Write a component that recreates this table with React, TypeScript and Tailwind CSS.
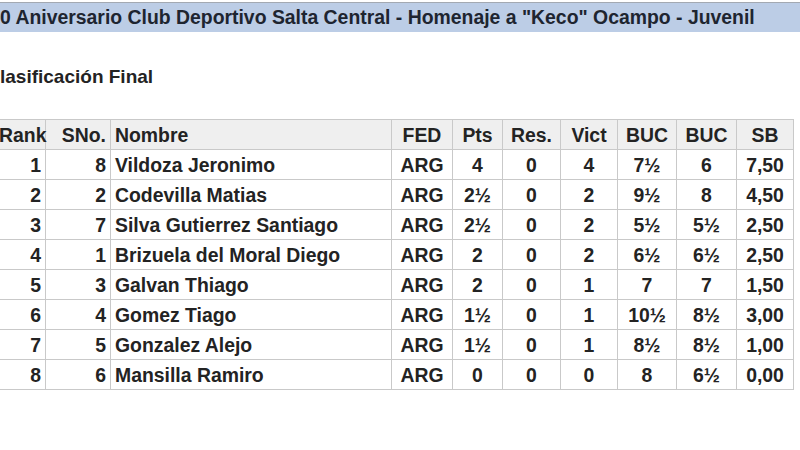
import React from "react";

type Row = {
  rank: number;
  sno: number;
  name: string;
  fed: string;
  pts: string;
  res: string;
  vict: string;
  buc1: string;
  buc2: string;
  sb: string;
};

const rows: Row[] = [
  { rank: 1, sno: 8, name: "Vildoza Jeronimo", fed: "ARG", pts: "4", res: "0", vict: "4", buc1: "7½", buc2: "6", sb: "7,50" },
  { rank: 2, sno: 2, name: "Codevilla Matias", fed: "ARG", pts: "2½", res: "0", vict: "2", buc1: "9½", buc2: "8", sb: "4,50" },
  { rank: 3, sno: 7, name: "Silva Gutierrez Santiago", fed: "ARG", pts: "2½", res: "0", vict: "2", buc1: "5½", buc2: "5½", sb: "2,50" },
  { rank: 4, sno: 1, name: "Brizuela del Moral Diego", fed: "ARG", pts: "2", res: "0", vict: "2", buc1: "6½", buc2: "6½", sb: "2,50" },
  { rank: 5, sno: 3, name: "Galvan Thiago", fed: "ARG", pts: "2", res: "0", vict: "1", buc1: "7", buc2: "7", sb: "1,50" },
  { rank: 6, sno: 4, name: "Gomez Tiago", fed: "ARG", pts: "1½", res: "0", vict: "1", buc1: "10½", buc2: "8½", sb: "3,00" },
  { rank: 7, sno: 5, name: "Gonzalez Alejo", fed: "ARG", pts: "1½", res: "0", vict: "1", buc1: "8½", buc2: "8½", sb: "1,00" },
  { rank: 8, sno: 6, name: "Mansilla Ramiro", fed: "ARG", pts: "0", res: "0", vict: "0", buc1: "8", buc2: "6½", sb: "0,00" },
];

const cell = "border border-[#c9c9c9] h-[30px] p-0 px-[4px] whitespace-nowrap";

export default function App() {
  return (
    <div className="h-[450px] w-[800px] overflow-hidden bg-white font-['Liberation_Sans',Arial,sans-serif] font-bold text-[#232323]">
      <div className="mt-[2px] flex h-[30px] items-center border-t border-[#a3a9b2] bg-[#bccde6] text-[19.4px] text-[#1e2530]">
        0 Aniversario Club Deportivo Salta Central - Homenaje a "Keco" Ocampo - Juvenil
      </div>
      <div className="mt-[33px] text-[19px] leading-[24px]">lasificación Final</div>
      <table className="-ml-[6px] mt-[30px] w-[799px] table-fixed border-collapse text-[19.4px] leading-[22px]">
        <colgroup>
          <col className="w-[51px]" />
          <col className="w-[65px]" />
          <col className="w-[281px]" />
          <col className="w-[61px]" />
          <col className="w-[50px]" />
          <col className="w-[58px]" />
          <col className="w-[57px]" />
          <col className="w-[59px]" />
          <col className="w-[60px]" />
          <col className="w-[57px]" />
        </colgroup>
        <thead>
          <tr className="bg-[#efefef]">
            <th className={`${cell} text-right`}>Rank</th>
            <th className={`${cell} text-right`}>SNo.</th>
            <th className={`${cell} text-left`}>Nombre</th>
            <th className={`${cell} text-center`}>FED</th>
            <th className={`${cell} text-center`}>Pts</th>
            <th className={`${cell} text-center`}>Res.</th>
            <th className={`${cell} text-center`}>Vict</th>
            <th className={`${cell} text-center`}>BUC</th>
            <th className={`${cell} text-center`}>BUC</th>
            <th className={`${cell} text-center`}>SB</th>
          </tr>
        </thead>
        <tbody>
          {rows.map((r) => (
            <tr key={r.rank} className="bg-white">
              <td className={`${cell} text-right`}>{r.rank}</td>
              <td className={`${cell} text-right`}>{r.sno}</td>
              <td className={`${cell} text-left`}>{r.name}</td>
              <td className={`${cell} text-center`}>{r.fed}</td>
              <td className={`${cell} text-center`}>{r.pts}</td>
              <td className={`${cell} text-center`}>{r.res}</td>
              <td className={`${cell} text-center`}>{r.vict}</td>
              <td className={`${cell} text-center`}>{r.buc1}</td>
              <td className={`${cell} text-center`}>{r.buc2}</td>
              <td className={`${cell} text-center`}>{r.sb}</td>
            </tr>
          ))}
        </tbody>
      </table>
    </div>
  );
}
